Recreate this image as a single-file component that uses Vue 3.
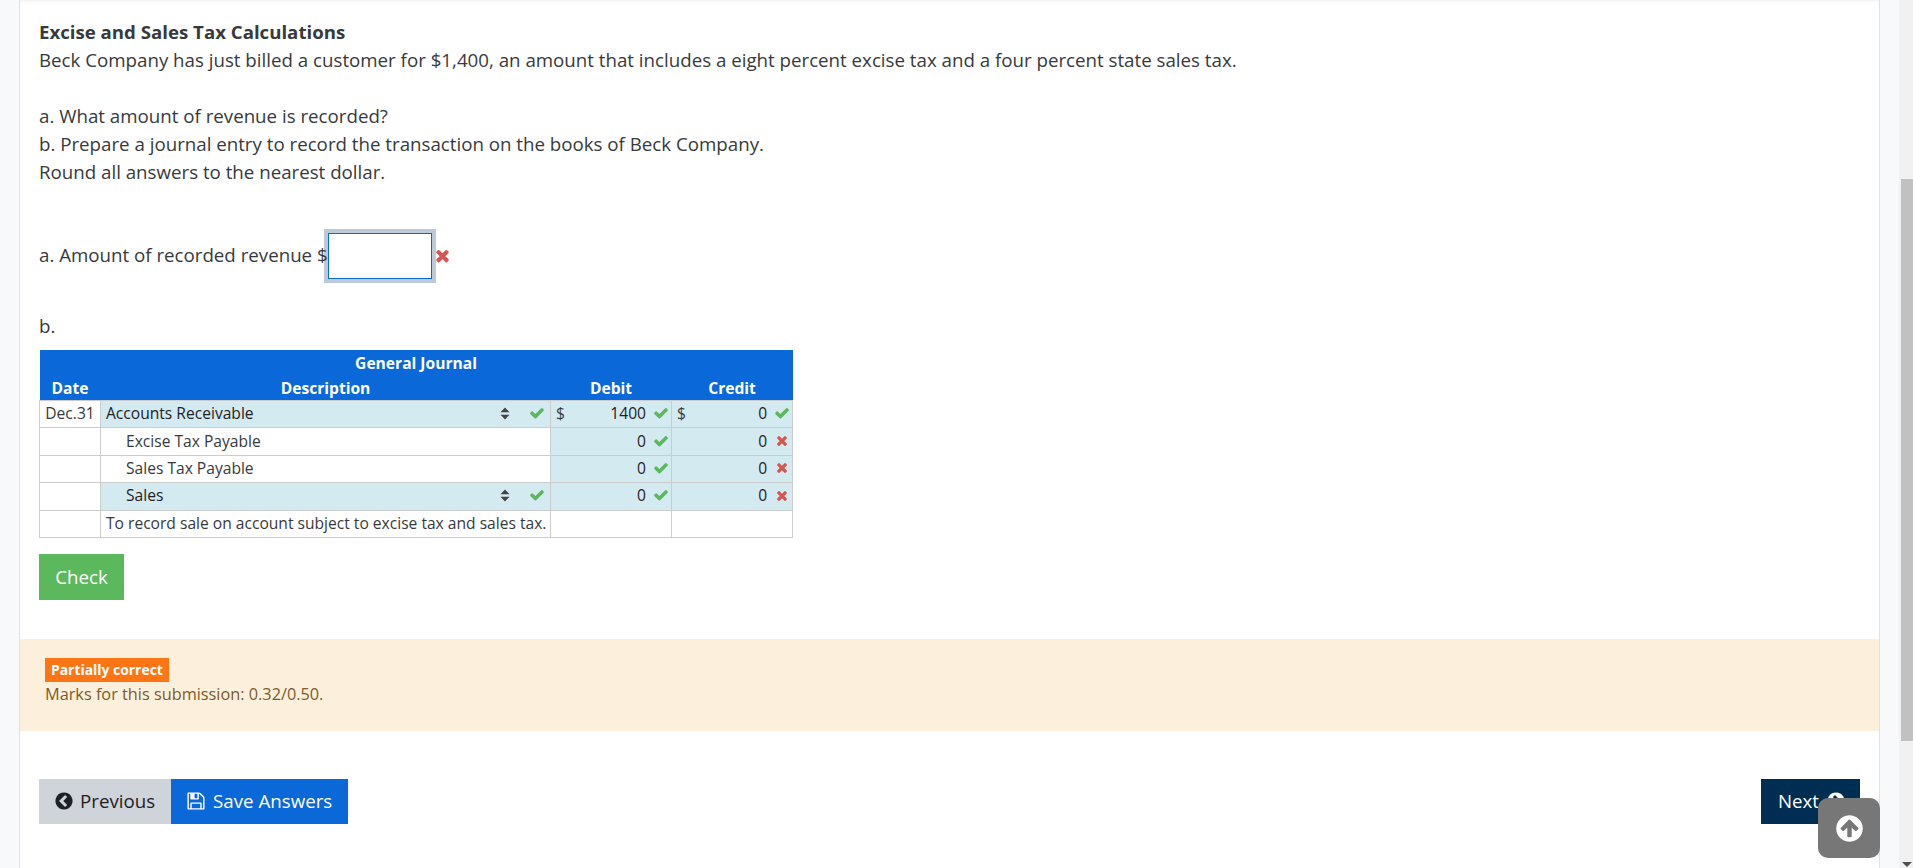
<script setup>
const paths = {
  check: 'M1671 566q0 40-28 68l-724 724-136 136q-28 28-68 28t-68-28l-136-136-362-362q-28-28-28-68t28-68l136-136q28-28 68-28t68 28l294 295 656-657q28-28 68-28t68 28l136 136q28 28 28 68z',
  times: 'M1298 1322q0 40-28 68l-136 136q-28 28-68 28t-68-28l-294-294-294 294q-28 28-68 28t-68-28l-136-136q-28-28-28-68t28-68l294-294-294-294q-28-28-28-68t28-68l136-136q28-28 68-28t68 28l294 294 294-294q28-28 68-28t68 28l136 136q28 28 28 68t-28 68l-294 294 294 294q28 28 28 68z',
}
const rows = [
  { date: 'Dec.31', desc: 'Accounts Receivable', indent: false, select: true, selectOk: true, dollar: true, debit: '1400', credit: '0', creditOk: true },
  { date: '', desc: 'Excise Tax Payable', indent: true, select: false, dollar: false, debit: '0', credit: '0', creditOk: false },
  { date: '', desc: 'Sales Tax Payable', indent: true, select: false, dollar: false, debit: '0', credit: '0', creditOk: false },
  { date: '', desc: 'Sales', indent: true, select: true, selectOk: true, dollar: false, debit: '0', credit: '0', creditOk: false },
]
</script>

<template>
  <div class="page">
    <main class="main">
      <section class="card">
        <div class="question">
          <h4 class="title">Excise and Sales Tax Calculations</h4>
          <p class="line">Beck Company has just billed a customer for $1,400, an amount that includes a eight percent excise tax and a four percent state sales tax.</p>
          <p class="line parts">a. What amount of revenue is recorded?</p>
          <p class="line">b. Prepare a journal entry to record the transaction on the books of Beck Company.</p>
          <p class="line">Round all answers to the nearest dollar.</p>

          <div class="answer-a">
            <span class="answer-label">a. Amount of recorded revenue $</span>
            <input class="amount" type="text" />
            <svg class="ico x-big" viewBox="0 0 1408 1792"><path :d="paths.times" /></svg>
          </div>

          <p class="line part-b">b.</p>

          <table class="journal">
            <colgroup>
              <col class="c-date" /><col class="c-desc" /><col class="c-num" /><col class="c-num" />
            </colgroup>
            <thead>
              <tr><th colspan="4" class="th-top">General Journal</th></tr>
              <tr>
                <th class="th-sub">Date</th>
                <th class="th-sub">Description</th>
                <th class="th-sub">Debit</th>
                <th class="th-sub">Credit</th>
              </tr>
            </thead>
            <tbody>
              <tr v-for="r in rows" :key="r.desc">
                <td class="date">{{ r.date }}</td>
                <td class="desc" :class="{ hl: r.select }">
                  <div class="desc-inner" :class="{ indent: r.indent }">
                    <span class="desc-text" :class="{ dark: r.select }">{{ r.desc }}</span>
                    <template v-if="r.select">
                      <svg class="sort" viewBox="0 0 10 15" preserveAspectRatio="none"><path d="M5 .5 9.5 6H.5zM.5 9h9L5 14.5z" /></svg>
                      <svg class="ico ok" viewBox="0 0 1792 1792"><path :d="paths.check" /></svg>
                    </template>
                  </div>
                </td>
                <td class="num hl">
                  <div class="num-inner">
                    <span v-if="r.dollar" class="dollar">$</span>
                    <span class="val">{{ r.debit }}</span>
                    <svg class="ico ok" viewBox="0 0 1792 1792"><path :d="paths.check" /></svg>
                  </div>
                </td>
                <td class="num hl">
                  <div class="num-inner">
                    <span v-if="r.dollar" class="dollar">$</span>
                    <span class="val">{{ r.credit }}</span>
                    <svg v-if="r.creditOk" class="ico ok" viewBox="0 0 1792 1792"><path :d="paths.check" /></svg>
                    <svg v-else class="ico bad" viewBox="0 0 1408 1792"><path :d="paths.times" /></svg>
                  </div>
                </td>
              </tr>
              <tr>
                <td class="date"></td>
                <td class="desc"><div class="desc-inner"><span class="desc-text">To record sale on account subject to excise tax and sales tax.</span></div></td>
                <td class="num"></td>
                <td class="num"></td>
              </tr>
            </tbody>
          </table>

          <button class="btn check" type="button">Check</button>
        </div>

        <div class="feedback">
          <span class="badge">Partially correct</span>
          <div class="marks">Marks for this submission: 0.32/0.50.</div>
        </div>

        <nav class="nav">
          <div class="nav-left">
            <button class="btn prev" type="button">
              <svg class="bi" viewBox="0 0 1792 1792"><path d="M1037 1395l102-102q19-19 19-45t-19-45l-307-307 307-307q19-19 19-45t-19-45l-102-102q-19-19-45-19t-45 19l-454 454q-19 19-19 45t19 45l454 454q19 19 45 19t45-19zm627-499q0 209-103 385.5t-279.5 279.5-385.5 103-385.5-103-279.5-279.5-103-385.5 103-385.5 279.5-279.5 385.5-103 385.5 103 279.5 279.5 103 385.5z" /></svg>
              Previous
            </button>
            <button class="btn save" type="button">
              <svg class="bi" viewBox="0 0 1792 1792"><path d="M512 1536h768v-384h-768v384zm896 0h128v-896q0-14-10-38.5t-20-34.5l-281-281q-10-10-34-20t-39-10v416q0 40-28 68t-68 28h-576q-40 0-68-28t-28-68v-416h-128v1280h128v-416q0-40 28-68t68-28h832q40 0 68 28t28 68v416zm-384-928v-320q0-13-9.5-22.5t-22.5-9.5h-192q-13 0-22.5 9.5t-9.5 22.5v320q0 13 9.5 22.5t22.5 9.5h192q13 0 22.5-9.5t9.5-22.5zm640 32v928q0 40-28 68t-68 28h-1344q-40 0-68-28t-28-68v-1344q0-40 28-68t68-28h928q40 0 88 20t76 48l280 280q28 28 48 76t20 88z" /></svg>
              Save Answers
            </button>
          </div>
          <button class="btn next" type="button">
            Next
            <svg class="bi" viewBox="0 0 1792 1792"><path d="M845 1395l454-454q19-19 19-45t-19-45l-454-454q-19-19-45-19t-45 19l-102 102q-19 19-19 45t19 45l307 307-307 307q-19 19-19 45t19 45l102 102q19 19 45 19t45-19zm819-499q0 209-103 385.5t-279.5 279.5-385.5 103-385.5-103-279.5-279.5-103-385.5 103-385.5 279.5-279.5 385.5-103 385.5 103 279.5 279.5 103 385.5z" /></svg>
          </button>
        </nav>

        <button class="to-top" type="button" aria-label="Back to top">
          <svg viewBox="0 0 1792 1792"><path d="M1412 895q0-27-18-45l-362-362-91-91q-18-18-45-18t-45 18l-91 91-362 362q-18 18-18 45t18 45l91 91q18 18 45 18t45-18l189-189v502q0 26 19 45t45 19h128q26 0 45-19t19-45v-502l189 189q19 19 45 19t45-19l91-91q18-18 18-45zm252 1q0 209-103 385.5t-279.5 279.5-385.5 103-385.5-103-279.5-279.5-103-385.5 103-385.5 279.5-279.5 385.5-103 385.5 103 279.5 279.5 103 385.5z" /></svg>
        </button>
      </section>
    </main>
    <aside class="scrollbar">
      <div class="thumb"></div>
      <div class="arrow"></div>
    </aside>
  </div>
</template>

<style>
html, body { margin: 0; height: 100%; overflow: hidden; }
</style>

<style scoped>
.page {
  display: flex;
  width: 1913px;
  height: 868px;
  overflow: hidden;
  font-family: "Open Sans", "Liberation Sans", sans-serif;
  color: #373a3c;
  background: #f8f9fa;
}
.main { flex: 1; padding: 0 19px 0 19px; min-width: 0; }
.card {
  position: relative;
  height: 868px;
  box-sizing: border-box;
  background: #fff;
  border-left: 1px solid #dfe1e3;
  border-right: 1px solid #dfe1e3;
  box-shadow: inset 0 3px 3px -2px #eee;
}
.question { padding: 18px 19px 0; }
.title { margin: 0; font-size: 18.65px; line-height: 28px; font-weight: 700; }
.line { margin: 0; font-size: 18.72px; line-height: 28px; }
.parts { margin-top: 28px; }
.answer-a {
  display: flex;
  align-items: center;
  margin-top: 47px;
  height: 46px;
  font-size: 18.72px;
  line-height: 28px;
}
.answer-label { position: relative; top: -1px; }
.amount {
  box-sizing: border-box;
  width: 104px;
  height: 46px;
  margin-left: 0;
  padding: 0;
  border: 1px solid #0a68d9;
  outline: none;
  box-shadow: 0 0 0 4px #bcc9d6;
  background: #fff;
}
.ico { fill: currentColor; flex: none; }
.x-big { width: 15px; height: 19px; color: #d9534f; margin-left: 3px; position: relative; top: -1px; }
.part-b { margin-top: 33px; }

.journal {
  margin-top: 10px;
  width: 753px;
  table-layout: fixed;
  border-collapse: collapse;
  font-size: 15.6px;
  line-height: 20px;
}
.c-date { width: 61px; }
.c-desc { width: 450px; }
.c-num { width: 121px; }
th { background: #0a68d9; color: #fff; padding: 0; font-weight: 700; text-align: center; font-size: 15.6px; }
.th-top { height: 25px; }
.th-sub { height: 25px; }
td { border: 1px solid #ccc; padding: 0; height: 26.4px; }
.hl { background: #d4eaf1; }
.date { text-align: center; padding-bottom: 2px; box-sizing: border-box; }
.desc-inner { display: flex; align-items: center; padding: 0 5px 2px 5px; }
.desc-inner.indent { padding-left: 25px; }
.desc-text { flex: 1; white-space: nowrap; }
.desc-text.dark { color: #1f2224; }
.sort { width: 10px; height: 13px; fill: #444; margin-right: 19px; flex: none; }
.ok { width: 16px; height: 16px; color: #5cb85c; }
.bad { width: 12px; height: 15px; color: #d9534f; margin-left: 2px; margin-right: 2px; }
.num-inner { display: flex; align-items: center; justify-content: flex-end; padding: 0 2px 2px 5px; }
.dollar { margin-right: auto; }
.val { color: #1f2224; margin-right: 7px; }

.btn {
  font-family: inherit;
  border: 0;
  padding: 0;
  margin: 0;
  font-size: 18.72px;
  line-height: 28px;
}
.check {
  display: block;
  margin-top: 16px;
  width: 85px;
  height: 46px;
  background: #5cb85c;
  color: #fff;
}
.feedback {
  margin-top: 39px;
  height: 92px;
  box-sizing: border-box;
  padding: 19px 25px 0;
  background: #fcefdc;
  color: #7d5a29;
}
.badge {
  display: block;
  width: fit-content;
  height: 24px;
  padding: 0 6px;
  background: #fd7514;
  color: #fff;
  font-size: 13.9px;
  line-height: 24px;
  font-weight: 700;
}
.marks { font-size: 16.3px; line-height: 24px; }
.nav {
  display: flex;
  justify-content: space-between;
  align-items: flex-start;
  margin-top: 48px;
  padding: 0 19px;
}
.nav-left { display: flex; }
.prev, .save, .next {
  display: flex;
  align-items: center;
  gap: 7px;
  height: 45px;
  box-sizing: border-box;
  padding: 0 16px 0 15px;
}
.prev { gap: 6px; }
.next { padding: 0 14px 0 17px; }
.bi { width: 20px; height: 20px; fill: currentColor; flex: none; }
.prev { background: #ced4da; color: #1d2125; }
.save { background: #0a68d9; color: #fff; }
.next { background: #002e52; color: #fff; }
.to-top {
  position: absolute;
  right: -1px;
  top: 798px;
  width: 62px;
  height: 60px;
  border: 0;
  padding: 0;
  border-radius: 10px;
  background: #777;
  display: flex;
  align-items: center;
  justify-content: center;
}
.to-top svg { width: 31px; height: 31px; fill: #fff; }
.scrollbar { position: relative; flex: none; width: 14px; background: #f1f1f1; }
.thumb {
  position: absolute;
  left: 2px;
  right: 0;
  top: 179px;
  height: 562px;
  background: #c1c1c1;
}
.arrow {
  position: absolute;
  left: 3px;
  bottom: 1px;
  width: 0;
  height: 0;
  border-left: 5px solid transparent;
  border-right: 5px solid transparent;
  border-top: 5px solid #505050;
}
</style>
